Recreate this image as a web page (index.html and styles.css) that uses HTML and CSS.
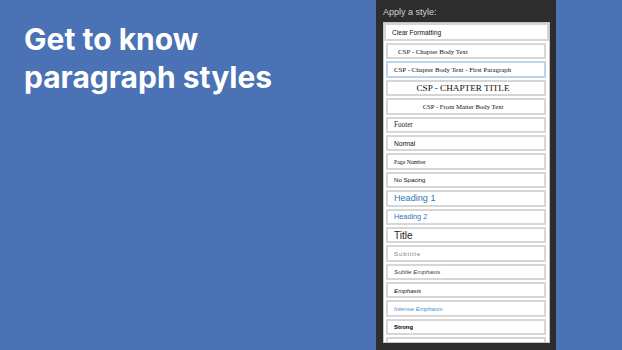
FILE: index.html
```html
<!DOCTYPE html>
<html lang="en">
<head>
<meta charset="utf-8">
<title>Get to know paragraph styles</title>
<link rel="stylesheet" href="styles.css">
</head>
<body>
<div class="slide">
  <div class="intro">
    <h1 class="headline">Get to know<br>paragraph styles</h1>
  </div>
  <aside class="panel">
    <div class="panel-label">Apply a style:</div>
    <div class="style-list">
      <div class="style-item clear"><span class="s-clear">Clear Formatting</span></div>
      <div class="style-item"><span class="s-body">CSP - Chapter Body Text</span></div>
      <div class="style-item selected"><span class="s-first">CSP - Chapter Body Text - First Paragraph</span></div>
      <div class="style-item centered"><span class="s-ctitle">CSP - CHAPTER TITLE</span></div>
      <div class="style-item centered"><span class="s-front">CSP - Front Matter Body Text</span></div>
      <div class="style-item"><span class="s-footer">Footer</span></div>
      <div class="style-item"><span class="s-normal">Normal</span></div>
      <div class="style-item"><span class="s-page">Page Number</span></div>
      <div class="style-item"><span class="s-nospace">No Spacing</span></div>
      <div class="style-item"><span class="s-h1">Heading 1</span></div>
      <div class="style-item"><span class="s-h2">Heading 2</span></div>
      <div class="style-item"><span class="s-title">Title</span></div>
      <div class="style-item"><span class="s-subtitle">Subtitle</span></div>
      <div class="style-item"><span class="s-subtle">Subtle Emphasis</span></div>
      <div class="style-item"><span class="s-emph">Emphasis</span></div>
      <div class="style-item"><span class="s-intense">Intense Emphasis</span></div>
      <div class="style-item"><span class="s-strong">Strong</span></div>
      <div class="style-item"></div>
    </div>
  </aside>
</div>
</body>
</html>
```
FILE: styles.css
```css
html, body {
  margin: 0;
  padding: 0;
}
body {
  width: 622px;
  height: 350px;
  overflow: hidden;
  background: #4a72b5;
}
.slide {
  display: grid;
  grid-template-columns: 376px 180px 1fr;
  height: 350px;
}
.intro {
  padding: 20px 0 0 24px;
}
.headline {
  margin: 0;
  font-family: Inter, "Liberation Sans", sans-serif;
  font-weight: 700;
  font-size: 30px;
  line-height: 38px;
  color: #ffffff;
}
.panel {
  background: #2d2d2d;
  padding: 6px 6px 0 7px;
  display: flex;
  flex-direction: column;
}
.panel-label {
  font-family: "Liberation Sans", Arial, sans-serif;
  font-size: 9px;
  line-height: 12px;
  color: #d2d2d2;
  margin-bottom: 4px;
}
.style-list {
  background: #ffffff;
  border: 1px solid #c4c4c4;
  height: 321px;
  box-sizing: border-box;
  overflow: hidden;
  display: flex;
  flex-direction: column;
  gap: 2px;
}
.style-item {
  flex: 0 0 auto;
  box-sizing: border-box;
  height: 16.4px;
  margin: 0 3px 0 2px;
  border: 2px solid #d6d6d6;
  display: flex;
  align-items: center;
  padding-left: 6px;
  white-space: nowrap;
  overflow: hidden;
  color: #111;
}
.style-item.clear {
  height: 18px;
  margin: 0;
  padding-left: 6px;
}
.style-item.selected {
  border-color: #bcd3ee;
  padding-left: 6px;
}
.style-item.centered {
  justify-content: center;
  padding-left: 0;
  padding-right: 6px;
}
.s-clear, .s-normal, .s-nospace, .s-subtitle, .s-subtle, .s-emph, .s-intense, .s-strong {
  font-family: "Liberation Sans", Arial, sans-serif;
  font-size: 6.5px;
}
.s-clear { font-size: 6.6px; }
.s-normal { font-size: 6.6px; }
.s-nospace { font-size: 6.1px; }
.s-body, .s-first, .s-ctitle, .s-front, .s-footer, .s-page {
  font-family: "Liberation Serif", "Times New Roman", serif;
}
.s-body { font-size: 6.9px; padding-left: 4px; }
.s-first { font-size: 6.85px; }
.s-ctitle { font-size: 9.2px; }
.s-front { font-size: 6.7px; }
.s-footer { font-size: 7.2px; color: #222; }
.s-page { font-size: 5.8px; }
.s-h1 {
  font-family: "Liberation Sans", Arial, sans-serif;
  font-size: 9.1px;
  color: #2f75b5;
}
.s-h2 {
  font-family: "Liberation Sans", Arial, sans-serif;
  font-size: 7.3px;
  color: #2f75b5;
}
.s-title {
  font-family: "Liberation Sans", Arial, sans-serif;
  font-size: 10px;
  color: #1a1a1a;
}
.s-subtitle {
  font-size: 6.2px;
  letter-spacing: 0.8px;
  color: #7a7a7a;
}
.s-subtle {
  font-size: 6.2px;
  font-style: italic;
  color: #444;
}
.s-emph {
  font-size: 6.2px;
  font-style: italic;
  color: #111;
}
.s-intense {
  font-size: 6.1px;
  font-style: italic;
  color: #4b8fd8;
}
.s-strong {
  font-size: 5.9px;
  font-weight: 700;
  color: #000;
}
```
